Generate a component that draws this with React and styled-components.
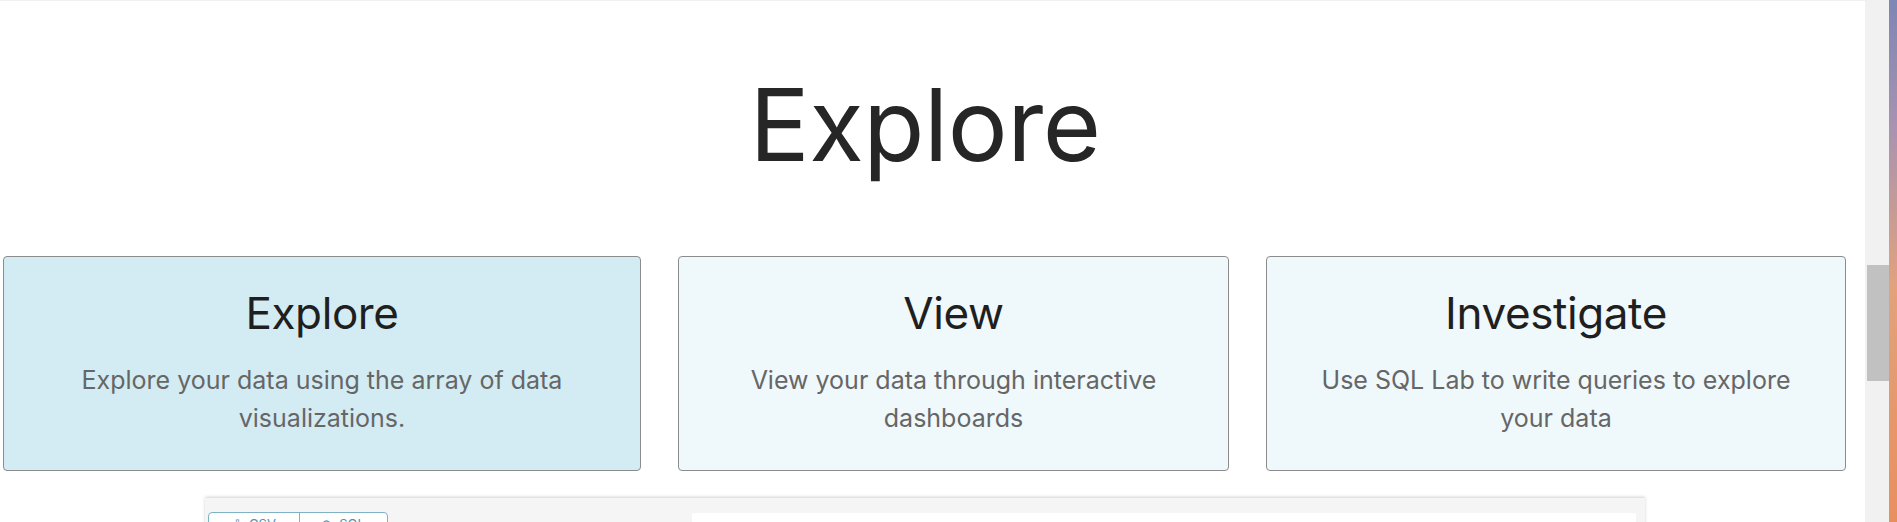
import React from "react";
import styled, { createGlobalStyle } from "styled-components";

const GlobalStyle = createGlobalStyle`
  html, body {
    margin: 0;
    padding: 0;
    overflow: hidden;
  }
  body {
    font-family: Inter, "Noto Sans", "Liberation Sans", sans-serif;
    background: #ffffff;
  }
`;

const Frame = styled.div`
  display: flex;
  height: 522px;
  width: 100%;
`;

const Page = styled.main`
  flex: 1;
  min-width: 0;
  background: #ffffff;
  border-top: 1px solid #f1f1f1;
  padding: 0 18px 0 3px;
  overflow: hidden;
`;

const Heading = styled.h1`
  margin: 64px 0 0;
  font-size: 100px;
  font-weight: 400;
  line-height: 120px;
  color: #262626;
  text-align: center;
  letter-spacing: -0.5px;
`;

const CardRow = styled.section`
  display: flex;
  gap: 37px;
  margin-top: 71px;
`;

const Card = styled.div`
  flex: 0 0 ${(p) => p.$width}px;
  box-sizing: border-box;
  background: ${(p) => (p.$active ? "#d3ecf3" : "#eff8fb")};
  border: 1px solid #8c8c8c;
  border-radius: 4px;
  padding: 29px 40px 33px;
  text-align: center;
`;

const CardTitle = styled.h2`
  margin: 0 0 21px;
  font-size: 44px;
  font-weight: 400;
  line-height: 54px;
  letter-spacing: -0.4px;
  color: #1f1f1f;
`;

const CardText = styled.p`
  margin: 0;
  font-size: 25px;
  line-height: 38px;
  color: #666666;
`;

const Panel = styled.section`
  width: 1440px;
  box-sizing: border-box;
  margin: 27px 0 0 202px;
  background: #f5f5f5;
  box-shadow: 0 -1px 3px rgba(0, 0, 0, 0.18);
  padding: 14px 9px 0 3px;
  display: flex;
  justify-content: space-between;
  align-items: flex-start;
  height: 40px;
`;

const ButtonGroup = styled.div`
  display: flex;
  border: 1px solid #7fb2c6;
  border-radius: 4px;
  background: #ffffff;
  overflow: hidden;
`;

const GroupButton = styled.button`
  width: ${(p) => p.$width}px;
  height: 30px;
  border: none;
  border-left: ${(p) => (p.$first ? "none" : "1px solid #7fb2c6")};
  background: transparent;
  font-family: Inter, "Noto Sans", sans-serif;
  font-size: 13px;
  color: #5b8fa5;
  padding: 3px 0 0;
  display: flex;
  justify-content: center;
  gap: 6px;
`;

const Editor = styled.div`
  width: 944px;
  height: 40px;
  margin-top: 1px;
  background: #ffffff;
  border-radius: 2px;
`;

const ScrollTrack = styled.div`
  width: 24px;
  background: #f1f1f1;
  padding: 265px 0 0 2px;
  box-sizing: border-box;
`;

const ScrollThumb = styled.div`
  height: 116px;
  background: #c1c1c1;
`;

const Desktop = styled.div`
  width: 8px;
  background: linear-gradient(
    180deg,
    #7d86b5 0%,
    #a993b0 25%,
    #e2a27c 55%,
    #e98f5e 100%
  );
`;

const cards = [
  {
    title: "Explore",
    text: "Explore your data using the array of data visualizations.",
    width: 638,
    active: true,
  },
  {
    title: "View",
    text: "View your data through interactive dashboards",
    width: 551,
  },
  {
    title: "Investigate",
    text: "Use SQL Lab to write queries to explore your data",
    width: 580,
  },
];

export default function App() {
  return (
    <>
      <GlobalStyle />
      <Frame>
        <Page>
          <Heading>Explore</Heading>
          <CardRow>
            {cards.map((c) => (
              <Card key={c.title} $width={c.width} $active={c.active}>
                <CardTitle>{c.title}</CardTitle>
                <CardText>{c.text}</CardText>
              </Card>
            ))}
          </CardRow>
          <Panel>
            <ButtonGroup>
              <GroupButton $first $width={90}>
                <span>⇩</span>
                <span>CSV</span>
              </GroupButton>
              <GroupButton $width={88}>
                <span>⟳</span>
                <span>SQL</span>
              </GroupButton>
            </ButtonGroup>
            <Editor />
          </Panel>
        </Page>
        <ScrollTrack>
          <ScrollThumb />
        </ScrollTrack>
        <Desktop />
      </Frame>
    </>
  );
}
